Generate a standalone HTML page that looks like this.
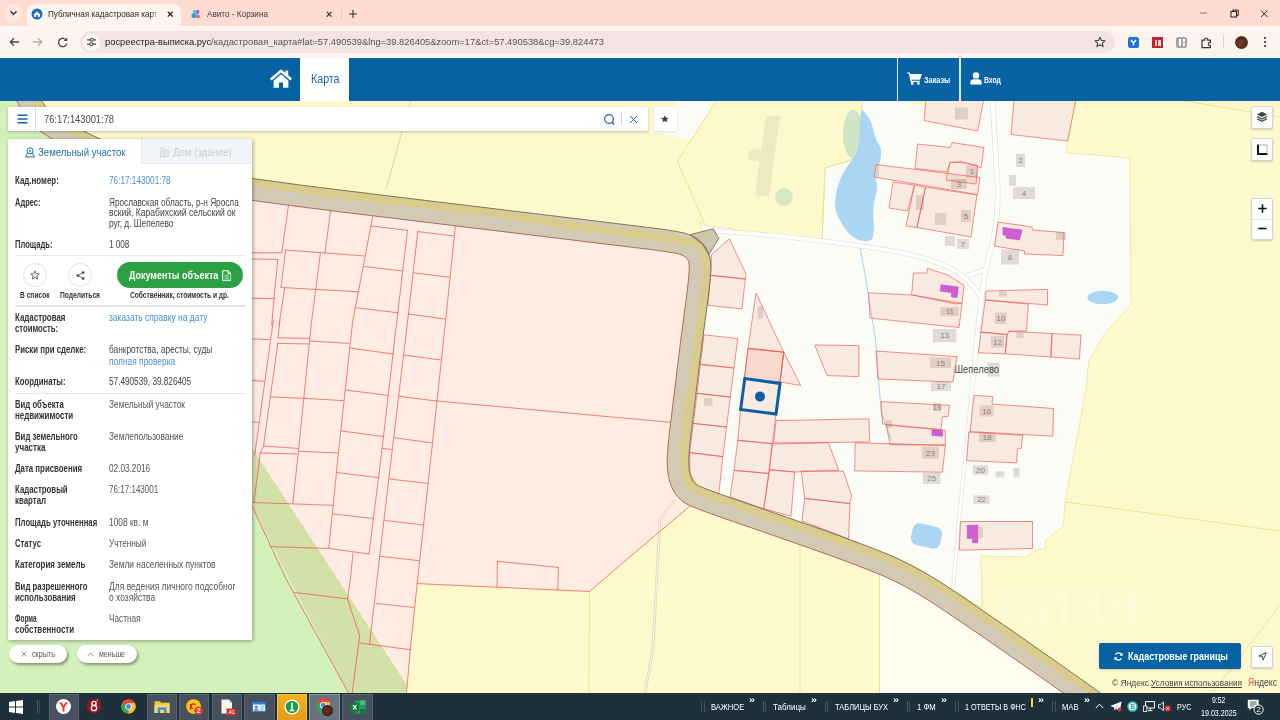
<!DOCTYPE html><html lang="ru"><head><meta charset="utf-8"><title>Публичная кадастровая карта</title><style>
html,body{margin:0;padding:0}
body{width:1280px;height:720px;overflow:hidden;position:relative;background:#fdf9cd;font-family:"Liberation Sans",sans-serif}
.tx{position:absolute;white-space:nowrap;transform-origin:0 50%;display:block}
.abs{position:absolute}
.mbtn{position:absolute;background:#fff;border:1px solid #d6d6d6;border-radius:2px;box-shadow:0 1px 2px rgba(0,0,0,.18);box-sizing:border-box}
</style></head><body>
<svg id="map" width="1280" height="720" viewBox="0 0 1280 720" style="position:absolute;left:0;top:0">
<rect width="1280" height="720" fill="#fdf9cd"/>
<polygon fill="#d3f1bb" points="0.0,95.0 25.0,95.0 30.5,104.0 42.0,120.0 65.0,134.0 110.0,156.0 180.0,177.0 252.0,190.0 252.0,448.0 407.0,692.0 407.0,700.0 0.0,700.0"/>
<polygon fill="#fcfcf6" stroke="#ece38e" stroke-width="0.8" points="700.0,222.0 705.0,225.0 822.0,242.5 825.0,168.0 851.0,160.0 860.0,154.0 862.0,99.0 1076.0,99.0 1066.0,152.5 1130.0,158.0 1131.0,305.0 1103.7,335.0 1088.7,361.0 1086.0,390.0 1065.0,502.0 1063.4,526.0 1045.6,540.0 1045.6,547.8 1034.0,550.6 1027.0,557.0 981.0,556.0 982.0,608.0 953.0,590.0 912.0,565.0 850.0,540.0 700.0,489.0 688.0,470.0 690.0,420.0 702.0,340.0 709.0,256.0"/>
<polygon fill="#fdf9cd" points="899.0,99.0 927.0,99.0 925.0,107.5"/>
<polygon fill="#fffdf0" points="879.5,560.0 879.5,700.0 1100.0,700.0 1000.0,640.0 900.0,570.0"/>
<polygon fill="#fcfcf6" points="676.0,99.0 718.0,99.0 691.0,140.0 650.0,131.5 676.0,120.0"/>
<polygon fill="#feece2" points="252.0,190.0 690.0,245.0 690.0,265.0 680.6,340.0 671.5,420.0 667.0,457.5 669.7,482.0 680.0,500.6 689.4,506.0 632.0,555.0 589.5,591.5 417.4,583.7 410.3,649.7 406.6,684.4 406.6,700.0 352.0,700.0 348.4,692.8 252.0,506.0"/>
<polygon fill="#d4e0aa" points="252.0,448.0 406.6,684.4 406.6,700.0 352.0,700.0 252.0,506.0"/>
<g fill="none" stroke="#ece38e" stroke-width="1">
<polyline points="717.0,100.0 677.5,161.0 705.0,225.0"/>
<polyline points="1180.0,100.0 1280.0,117.0"/>
<polyline points="800.0,544.0 800.0,693.0"/>
<polyline points="879.5,572.0 879.5,693.0"/>
<polyline points="589.5,591.5 589.0,693.0"/>
<polyline points="1066.0,502.0 1100.0,506.5 1280.0,531.0"/>
<polyline points="1280.0,605.0 1212.5,693.0"/>
<polyline points="822.0,242.5 825.0,168.0 851.0,160.0"/>
</g>
<polyline fill="none" stroke="#cfdab4" stroke-width="1" points="411.0,100.0 386.0,189.0"/>
<polygon fill="#efe9c3" points="766.0,116.0 780.0,116.0 769.0,197.0 755.0,195.0 759.5,161.0 748.0,160.0 749.0,149.0 761.0,150.0"/>
<circle cx="784" cy="197" r="9" fill="#d5e8c4"/>
<ellipse cx="853" cy="134" rx="10" ry="24" fill="#cfe6c6"/>
<polygon fill="#aad6f4" points="862.5,110.0 863.0,110.6 864.1,111.9 865.7,113.8 867.8,116.2 869.7,119.2 871.2,122.7 872.5,126.6 873.5,130.9 874.7,135.0 876.1,138.8 877.6,142.2 879.4,145.3 880.6,148.4 881.2,151.6 881.2,154.7 880.8,157.8 880.1,161.1 879.2,164.5 878.1,168.1 876.9,171.9 876.1,175.3 875.9,178.4 876.1,181.2 876.9,183.8 877.1,186.9 876.8,190.6 875.9,195.0 874.6,200.0 873.7,205.5 873.2,211.4 873.2,217.8 873.8,224.7 873.8,230.3 873.5,234.6 872.8,237.6 871.7,239.4 869.8,240.5 867.0,241.0 863.4,240.9 859.1,240.1 854.8,238.2 850.8,235.2 846.9,230.9 843.1,225.6 840.1,220.6 837.8,216.0 836.2,211.9 835.3,208.1 835.0,203.8 835.3,198.8 836.2,193.1 837.8,186.9 839.5,181.2 841.5,176.2 843.8,171.9 846.2,168.1 848.7,164.5 851.1,161.1 853.4,157.8 855.6,154.7 857.4,150.0 858.6,143.8 859.4,135.9 859.6,126.6 860.0,119.4 860.4,114.4 860.9,111.6 861.6,110.9 862.0,110.5 862.3,110.2 862.5,110.0"/>
<ellipse cx="1102.8" cy="297.5" rx="15.4" ry="6.8" fill="#aad6f4"/>
<rect x="911.5" y="525" width="30" height="22" rx="7" fill="#aad6f4" transform="rotate(13 926.5 536)"/>
<polyline fill="none" stroke="#a9d1ee" stroke-width="1" points="860.0,247.5 866.0,280.0 875.6,340.0 881.0,411.0 891.5,441.0"/>
<polyline fill="none" stroke="#e0e0e0" stroke-width="5.6" stroke-linejoin="round" points="992.5,99.0 992.7,102.8 993.2,110.4 993.8,121.9 994.7,137.1 995.5,151.1 996.2,163.7 996.9,175.0 997.6,185.0 997.8,195.0 997.5,205.0 996.8,215.0 995.7,225.0 994.4,233.9 993.0,241.6 991.4,248.2 989.6,253.8 988.0,259.6 986.5,265.9 985.1,272.5 983.9,279.5 982.4,290.4 980.6,305.1 978.6,323.8 976.4,346.2 974.7,363.1 973.6,374.4 973.0,380.0"/>
<polyline fill="none" stroke="#e0e0e0" stroke-width="4.0" stroke-linejoin="round" points="973.0,380.0 961.0,500.0 953.0,588.0"/>
<polyline fill="none" stroke="#e0e0e0" stroke-width="5.0" stroke-linejoin="round" points="716.0,231.0 720.0,231.3 728.0,231.9 740.0,232.9 756.0,234.1 770.7,235.4 784.1,236.6 796.1,237.9 806.9,239.1 817.4,240.4 827.6,241.6 837.6,242.9 847.4,244.1 857.1,245.4 866.7,246.8 876.2,248.2 885.8,249.8 894.8,251.4 903.4,253.1 911.6,255.0 919.4,257.0 926.7,259.1 933.6,261.4 940.0,263.8 946.0,266.2 951.4,268.9 956.3,271.6 960.6,274.5 964.4,277.5 967.9,280.7 971.1,284.1 974.1,287.6 976.9,291.4 978.9,294.2 980.3,296.1 981.0,297.0"/>
<polyline fill="none" stroke="#e0e0e0" stroke-width="5.0" stroke-linejoin="round" points="966.0,276.0 986.0,269.5"/>
<polyline fill="none" stroke="#ffffff" stroke-width="4.2" stroke-linejoin="round" points="992.5,99.0 992.7,102.8 993.2,110.4 993.8,121.9 994.7,137.1 995.5,151.1 996.2,163.7 996.9,175.0 997.6,185.0 997.8,195.0 997.5,205.0 996.8,215.0 995.7,225.0 994.4,233.9 993.0,241.6 991.4,248.2 989.6,253.8 988.0,259.6 986.5,265.9 985.1,272.5 983.9,279.5 982.4,290.4 980.6,305.1 978.6,323.8 976.4,346.2 974.7,363.1 973.6,374.4 973.0,380.0"/>
<polyline fill="none" stroke="#ffffff" stroke-width="2.6" stroke-linejoin="round" points="973.0,380.0 961.0,500.0 953.0,588.0"/>
<polyline fill="none" stroke="#ffffff" stroke-width="3.6" stroke-linejoin="round" points="716.0,231.0 720.0,231.3 728.0,231.9 740.0,232.9 756.0,234.1 770.7,235.4 784.1,236.6 796.1,237.9 806.9,239.1 817.4,240.4 827.6,241.6 837.6,242.9 847.4,244.1 857.1,245.4 866.7,246.8 876.2,248.2 885.8,249.8 894.8,251.4 903.4,253.1 911.6,255.0 919.4,257.0 926.7,259.1 933.6,261.4 940.0,263.8 946.0,266.2 951.4,268.9 956.3,271.6 960.6,274.5 964.4,277.5 967.9,280.7 971.1,284.1 974.1,287.6 976.9,291.4 978.9,294.2 980.3,296.1 981.0,297.0"/>
<polyline fill="none" stroke="#ffffff" stroke-width="3.6" stroke-linejoin="round" points="966.0,276.0 986.0,269.5"/>
<polyline fill="none" stroke="#e0cfc0" stroke-width="2.6" points="675.0,500.0 660.0,519.0 653.0,648.0 645.0,693.0"/>
<polyline fill="none" stroke="#fdf3e6" stroke-width="1.2" points="675.0,500.0 660.0,519.0 653.0,648.0 645.0,693.0"/>
<g fill="#e0dcd5">
<rect x="1016" y="154" width="9" height="13"/>
<rect x="1009" y="175" width="7" height="11"/>
<rect x="1013" y="187" width="22" height="12"/>
<rect x="1001" y="249.5" width="18" height="15"/>
<rect x="957" y="239" width="12" height="10"/>
<rect x="945" y="236" width="10" height="10"/>
<rect x="961" y="210" width="10" height="12"/>
<rect x="935" y="213" width="11" height="12"/>
<rect x="916" y="195" width="8" height="15"/>
<rect x="966" y="165.5" width="12" height="12"/>
<rect x="951" y="179" width="16" height="10"/>
<rect x="955" y="107.5" width="13" height="12"/>
<rect x="1056" y="232" width="10" height="8"/>
<rect x="940.6" y="307" width="18.4" height="9"/>
<rect x="932.75" y="329" width="23.75" height="13"/>
<rect x="930" y="357.5" width="21" height="10.5"/>
<rect x="931" y="381.5" width="20" height="9.5"/>
<rect x="995" y="312.5" width="11.6" height="11.5"/>
<rect x="991" y="336" width="13" height="11.75"/>
<rect x="1016.5" y="332" width="7.2" height="6"/>
<rect x="999" y="291" width="8" height="5.5"/>
<rect x="987.5" y="362.75" width="12.2" height="13.85"/>
<rect x="933" y="402.5" width="8" height="9"/>
<rect x="886" y="420" width="6" height="8"/>
<rect x="922" y="446.5" width="16.75" height="12.25"/>
<rect x="922.8" y="472.8" width="17.8" height="11.2"/>
<rect x="979.6" y="405.3" width="13.9" height="11.2"/>
<rect x="979" y="432.5" width="16.4" height="9.5"/>
<rect x="972.9" y="465.3" width="15" height="9.4"/>
<rect x="995.4" y="471.3" width="9" height="6.2"/>
<rect x="1013.4" y="467.75" width="6" height="9.75"/>
<rect x="973.4" y="495.3" width="16.35" height="8.45"/>
<rect x="978" y="527" width="4.8" height="11.4"/>
<rect x="757.5" y="306" width="5.5" height="12.4"/>
<rect x="704" y="398" width="8.5" height="7.6"/>
<rect x="874.5" y="165" width="4.5" height="12"/>
</g>
<g font-family="'Liberation Sans',sans-serif" font-size="8" fill="#858585" text-anchor="middle">
<text x="1020.5" y="163.4">2</text>
<text x="1024.0" y="195.9">4</text>
<text x="1010.0" y="259.9">8</text>
<text x="963.0" y="246.9">7</text>
<text x="966.0" y="218.9">5</text>
<text x="972.0" y="174.4">1</text>
<text x="959.0" y="186.9">3</text>
<text x="949.8" y="314.4">11</text>
<text x="944.6" y="338.4">13</text>
<text x="940.5" y="365.6">15</text>
<text x="941.0" y="389.1">17</text>
<text x="1000.8" y="321.1">10</text>
<text x="997.5" y="344.8">12</text>
<text x="937.0" y="409.9">19</text>
<text x="930.4" y="455.5">23</text>
<text x="931.7" y="481.3">25</text>
<text x="986.6" y="413.8">16</text>
<text x="987.2" y="440.1">18</text>
<text x="980.4" y="472.9">20</text>
<text x="981.6" y="502.4">22</text>
</g>
<text x="954.5" y="373" font-family="'Liberation Sans',sans-serif" font-size="10" fill="#4a4a4a" textLength="44.5" lengthAdjust="spacingAndGlyphs">Шепелево</text>
<g fill="rgba(225,85,50,0.105)" stroke="#ea5a4e" stroke-opacity="0.85" stroke-width="0.8" stroke-linejoin="round">
<polygon points="711.5,254.7 729.4,238.8 746.2,274.4 745.3,279.0 710.6,275.3"/>
<polygon points="710.6,275.3 745.3,279.0 742.0,309.0 707.8,305.3"/>
<polygon points="704.0,334.8 737.8,338.5 734.0,368.0 700.3,364.4"/>
<polygon points="700.3,364.4 734.0,368.0 730.3,397.0 697.0,393.4"/>
<polygon points="697.0,393.4 730.3,397.0 726.6,427.0 693.4,423.4"/>
<polygon points="693.4,423.4 726.6,427.0 722.8,456.6 689.6,452.5"/>
<polygon points="689.6,452.5 722.8,456.6 718.8,493.8 697.0,486.5 690.0,474.0"/>
<polygon points="756.0,293.0 783.8,352.2 748.0,348.4"/>
<polygon points="748.0,348.4 783.8,352.2 780.0,382.0 744.4,378.4"/>
<polygon points="748.0,348.4 783.8,352.2 780.0,382.0 744.4,378.4"/>
<polygon points="783.8,352.2 800.6,385.4 780.0,382.0"/>
<polygon points="744.8,378.4 780.0,383.5 776.0,414.0 740.6,409.4"/>
<polygon points="740.6,409.4 776.0,414.0 772.5,443.7 737.8,440.3"/>
<polygon points="737.8,440.3 772.5,443.7 768.8,473.5 734.0,470.3"/>
<polygon points="734.0,470.3 768.8,473.5 763.8,508.8 730.0,497.0"/>
<polygon points="814.7,345.0 858.8,345.6 858.8,376.6 827.0,375.6"/>
<polygon points="776.2,420.6 869.0,418.8 869.6,442.0 773.4,443.0"/>
<polygon points="772.0,444.0 828.4,442.8 838.8,470.3 794.7,472.0 769.4,469.8"/>
<polygon points="769.4,469.8 794.7,472.0 791.0,516.2 763.8,508.8"/>
<polygon points="801.2,470.9 843.4,471.2 851.5,495.6 850.0,503.5 804.6,498.4"/>
<polygon points="804.6,498.4 850.0,503.5 848.5,538.8 802.0,521.0"/>
<polygon points="855.2,442.8 945.3,445.2 942.5,472.2 854.7,470.9"/>
<polygon points="886.2,425.0 945.3,430.2 945.3,445.2 890.0,444.7"/>
<polygon points="881.0,401.6 949.6,405.3 948.0,416.6 942.5,416.6 941.0,429.7 882.5,424.0"/>
<polygon points="876.0,351.0 957.0,356.6 952.8,382.0 877.8,379.0"/>
<polygon points="868.4,292.8 911.6,295.0 962.0,303.5 959.0,327.5 870.0,318.0"/>
<polygon points="913.4,273.0 926.6,273.0 927.5,268.4 948.0,275.0 964.0,285.3 962.0,303.0 955.6,304.0 911.6,294.7"/>
<polygon points="986.0,291.0 1047.5,289.4 1047.5,305.0 985.0,300.0"/>
<polygon points="985.2,300.0 1028.4,304.0 1026.5,331.0 1009.0,331.2 1007.0,334.6 981.0,332.0"/>
<polygon points="981.0,332.2 1007.0,334.6 1005.3,353.8 978.5,352.8"/>
<polygon points="1009.0,331.2 1052.0,333.5 1051.0,357.0 1005.3,353.8 1007.0,334.6"/>
<polygon points="1052.0,333.5 1081.0,335.0 1079.4,359.0 1051.0,357.0"/>
<polygon points="974.0,395.4 992.8,396.5 992.0,404.0 1053.5,408.5 1052.8,436.2 970.2,431.6"/>
<polygon points="968.8,432.0 1022.8,435.3 1021.2,448.4 1017.5,448.4 1016.6,462.9 966.5,460.6"/>
<polygon points="960.3,521.5 1032.5,521.5 1032.5,548.4 959.4,550.2"/>
<polygon points="926.0,99.0 984.0,99.0 977.5,131.0 924.0,120.5"/>
<polygon points="1014.0,99.0 1076.0,99.0 1067.5,141.0 1011.0,134.5"/>
<polygon points="917.5,144.0 950.0,147.5 952.0,142.5 984.0,147.5 981.0,168.0 977.0,166.0 961.0,162.0 950.0,162.5 947.0,172.0 915.0,168.5"/>
<polygon points="876.0,164.5 980.0,177.5 977.5,194.5 874.0,177.0"/>
<polygon points="950.0,162.5 961.0,162.0 977.5,165.5 976.0,184.0 946.0,180.0"/>
<polygon points="893.0,182.0 914.5,185.0 907.5,211.0 889.0,208.0"/>
<polygon points="914.5,185.0 925.5,187.0 917.0,227.5 906.0,226.0"/>
<polygon points="925.5,187.0 977.0,195.0 971.0,237.0 917.0,227.5"/>
<polygon points="998.0,222.0 1032.0,227.0 1032.5,230.0 1064.0,232.5 1063.0,255.5 1024.5,254.0 1024.5,251.0 994.5,246.0"/>
</g>
<g fill="#cf5fd0" stroke="#b84fc0" stroke-width="0.6">
<polygon points="1003.0,227.5 1022.0,230.0 1019.5,240.0 1006.0,238.0 1006.0,235.0 1003.0,235.0"/>
<polygon points="941.0,284.8 958.4,287.0 957.0,297.5 951.5,297.0 951.5,292.8 940.2,291.0"/>
<polygon points="932.0,429.7 942.5,430.5 942.5,436.2 932.0,435.5"/>
<polygon points="967.2,525.3 977.8,525.3 977.8,542.8 972.5,542.8 972.5,538.4 967.2,538.4"/>
</g>
<g stroke="#ea5a4e" stroke-width="0.9" stroke-linecap="round" opacity="0.85">
<line x1="288.4" y1="206" x2="281.9" y2="251.9"/>
<line x1="330.6" y1="210.6" x2="325" y2="252.8"/>
<line x1="285.6" y1="250" x2="280.9" y2="287.5"/>
<line x1="284.7" y1="288.4" x2="279" y2="325"/>
<line x1="277.75" y1="259.4" x2="271.6" y2="325"/>
<line x1="252" y1="252.8" x2="281.9" y2="252.8"/>
<line x1="252" y1="259" x2="277.75" y2="259.4"/>
<line x1="285.6" y1="250" x2="364.4" y2="256"/>
<line x1="281.9" y1="287.5" x2="358.75" y2="291.8"/>
<line x1="252" y1="298.2" x2="275.3" y2="298.75"/>
<line x1="371" y1="226" x2="407.5" y2="230.3"/>
<line x1="364.4" y1="266.5" x2="402.8" y2="271"/>
<line x1="356.5" y1="307.75" x2="398" y2="312.8"/>
<line x1="417.8" y1="231.6" x2="454" y2="236"/>
<line x1="413.5" y1="272.9" x2="449" y2="277.2"/>
<line x1="408.4" y1="314" x2="445" y2="319"/>
<line x1="273.4" y1="320" x2="254.7" y2="455"/>
<line x1="280" y1="320" x2="278.1" y2="337.8"/>
<line x1="252" y1="338.75" x2="269.7" y2="339.7"/>
<line x1="278" y1="337.8" x2="310" y2="338.4"/>
<line x1="277.75" y1="343.4" x2="309.6" y2="344"/>
<line x1="310" y1="341" x2="349" y2="343.4"/>
<line x1="252" y1="380.4" x2="264" y2="381.3"/>
<line x1="271" y1="396.9" x2="304.4" y2="398.4"/>
<line x1="304.4" y1="398.4" x2="343.4" y2="400.6"/>
<line x1="252" y1="421.6" x2="258.4" y2="422.6"/>
<line x1="263.5" y1="446" x2="298.4" y2="448.4"/>
<line x1="260.3" y1="453" x2="297" y2="454"/>
<line x1="298.75" y1="451.25" x2="338" y2="453"/>
<line x1="349.4" y1="348" x2="393.4" y2="354"/>
<line x1="345.6" y1="390" x2="387.8" y2="395.4"/>
<line x1="341.5" y1="431" x2="383.5" y2="436.6"/>
<line x1="403.75" y1="355" x2="440.9" y2="360"/>
<line x1="399" y1="396.3" x2="436.6" y2="401"/>
<line x1="436.6" y1="401" x2="670.5" y2="422.3"/>
<line x1="394.4" y1="437.75" x2="431.5" y2="442.8"/>
<line x1="382" y1="448.4" x2="391.6" y2="449.4"/>
<line x1="252.8" y1="502.5" x2="333.4" y2="505.3"/>
<line x1="269.7" y1="546.6" x2="328.75" y2="548.4"/>
<line x1="328.75" y1="548.4" x2="369" y2="554"/>
<line x1="336.6" y1="472.5" x2="378.4" y2="477.6"/>
<line x1="332.9" y1="514" x2="372.8" y2="518.4"/>
<line x1="389.7" y1="479" x2="427.75" y2="483.4"/>
<line x1="384.6" y1="520.3" x2="422.9" y2="525"/>
<line x1="379.75" y1="556.3" x2="418.4" y2="560.6"/>
<line x1="295" y1="592.5" x2="347.5" y2="599"/>
<line x1="347.5" y1="599" x2="359.7" y2="635.6"/>
<line x1="359.7" y1="635.6" x2="352.2" y2="692.8"/>
<line x1="359.7" y1="643" x2="410.3" y2="649.7"/>
<line x1="410.3" y1="649.7" x2="406.6" y2="692"/>
<line x1="376" y1="603.4" x2="414" y2="607.5"/>
<line x1="417.4" y1="583.6" x2="589.5" y2="591.5"/>
<line x1="589.5" y1="591.5" x2="632" y2="555"/>
<line x1="632" y1="555" x2="689.4" y2="506.6"/>
<line x1="497.4" y1="561.3" x2="558.5" y2="567.4"/>
<line x1="558.5" y1="567.4" x2="557.7" y2="590"/>
<line x1="497.4" y1="561.3" x2="497" y2="587.3"/>
<polyline fill="none" points="320.3,253.8 311.5,322.0 298.4,451.5 292.8,503.4"/>
<polyline fill="none" points="372.8,216.2 352.6,322.0 338.5,452.0 328.8,548.4"/>
<polyline fill="none" points="407.5,230.3 396.7,322.0 381.7,452.0 369.0,554.0"/>
<polyline fill="none" points="417.8,231.6 407.5,322.0 392.0,452.0 377.5,575.0 369.6,644.0"/>
<polyline fill="none" points="455.3,226.6 445.5,322.0 431.5,452.0 417.2,583.5 410.3,649.7"/>
<polyline fill="none" points="277.8,343.4 263.5,446.0 260.3,452.8 253.8,502.5"/>
<polyline fill="none" points="353.0,553.0 350.5,578.0 347.5,599.0"/>
<polyline fill="none" points="252.0,506.0 285.0,577.0 348.4,692.8"/>
</g>
<polygon fill="#d2cab4" points="21.7,63.2 21.8,63.5 22.1,64.1 22.6,65.0 23.2,66.3 24.0,67.9 24.9,69.7 26.0,71.9 27.3,74.4 28.5,76.8 29.7,79.2 30.8,81.5 32.0,83.7 33.1,85.8 34.2,87.9 35.3,90.0 36.3,91.8 37.3,93.7 38.3,95.5 39.5,97.4 40.6,99.2 41.8,101.0 43.1,102.9 44.3,104.8 45.5,106.4 46.7,107.9 48.1,109.3 49.6,110.8 51.4,112.4 53.4,113.9 55.5,115.5 57.8,117.0 60.5,118.6 63.5,120.4 66.9,122.3 70.7,124.4 74.9,126.6 79.4,128.9 84.2,131.3 89.5,133.9 94.9,136.6 100.7,139.2 106.8,141.8 113.4,144.5 120.4,147.1 127.8,149.7 135.6,152.3 143.8,154.9 152.4,157.4 161.0,159.9 169.7,162.3 178.4,164.5 187.1,166.6 195.9,168.6 204.7,170.4 213.5,172.2 222.3,173.8 233.3,175.6 246.3,177.6 261.4,179.8 278.6,182.1 297.8,184.7 319.2,187.4 342.6,190.3 368.1,193.4 393.2,196.5 418.1,199.5 442.7,202.5 466.9,205.4 490.9,208.3 514.5,211.2 537.8,214.0 560.8,216.8 581.4,219.3 599.5,221.5 615.2,223.4 628.4,225.0 639.2,226.4 647.6,227.4 653.6,228.1 657.1,228.6 660.6,229.0 664.0,229.5 667.2,230.0 670.4,230.5 673.4,231.0 676.4,231.5 679.2,232.0 682.2,232.6 685.3,233.4 688.2,234.4 691.0,235.5 693.7,236.8 696.3,238.3 698.8,240.0 701.0,242.0 703.1,244.1 704.9,246.4 706.5,248.9 707.8,251.5 708.9,254.3 709.7,257.1 710.3,260.0 710.7,262.9 710.9,265.9 710.8,269.5 710.6,273.6 710.3,278.3 709.7,283.7 709.1,289.9 708.2,296.7 707.3,304.3 706.1,312.6 705.0,321.0 703.9,329.7 702.7,338.6 701.6,347.7 700.4,357.0 699.2,366.5 698.0,376.3 696.8,386.3 695.7,395.6 694.7,404.2 693.7,412.1 692.9,419.3 692.1,425.7 691.4,431.5 690.8,436.6 690.3,440.9 689.8,444.9 689.5,448.7 689.2,452.3 689.0,455.6 688.9,458.6 688.8,461.4 688.8,463.9 688.9,466.2 689.1,468.3 689.3,470.2 689.7,472.1 690.1,473.9 690.5,475.6 691.1,477.2 691.7,478.7 692.3,480.0 692.9,481.0 693.6,482.0 694.3,482.8 695.1,483.6 696.0,484.3 697.1,485.0 698.3,485.7 699.8,486.4 702.6,487.5 706.4,489.0 711.1,490.8 716.8,492.9 723.4,495.2 730.9,497.9 739.4,500.8 748.7,504.1 758.1,507.3 767.6,510.6 777.0,513.9 786.6,517.2 796.1,520.5 805.7,523.9 815.3,527.2 824.9,530.6 834.3,533.9 843.3,537.2 852.1,540.5 860.5,543.6 868.7,546.7 876.5,549.8 884.0,552.8 891.3,555.8 898.9,559.2 906.7,563.0 914.6,567.1 922.6,571.5 930.8,576.3 939.2,581.4 947.7,586.9 956.3,592.6 965.0,598.5 974.1,604.6 983.3,611.0 992.8,617.5 1002.6,624.2 1012.6,631.1 1022.8,638.2 1033.3,645.6 1043.0,652.4 1052.0,658.7 1060.2,664.5 1067.7,669.8 1074.5,674.5 1080.6,678.8 1085.9,682.6 1090.4,685.8 1094.4,688.7 1097.8,691.1 1100.6,693.2 1102.9,694.8 1104.6,696.0 1105.7,696.8 1106.3,697.2 1093.7,714.8 1093.1,714.4 1092.0,713.6 1090.3,712.3 1088.0,710.7 1085.2,708.7 1081.8,706.2 1077.8,703.4 1073.3,700.2 1068.0,696.4 1062.0,692.2 1055.3,687.4 1047.8,682.1 1039.6,676.3 1030.6,670.1 1020.9,663.3 1010.4,656.0 1000.2,648.9 990.3,642.0 980.6,635.3 971.1,628.8 961.9,622.5 952.9,616.4 944.2,610.6 935.8,604.9 927.7,599.7 919.7,594.8 912.0,590.3 904.4,586.1 897.0,582.3 889.8,578.8 882.8,575.7 875.9,572.8 868.5,569.9 860.8,566.9 852.9,563.8 844.5,560.7 835.9,557.5 827.0,554.3 817.7,551.0 808.1,547.6 798.5,544.2 789.0,540.9 779.4,537.6 770.0,534.3 760.5,531.0 751.1,527.7 741.7,524.5 732.3,521.2 723.8,518.3 716.2,515.6 709.5,513.2 703.6,511.1 698.7,509.2 694.6,507.6 691.3,506.3 688.6,505.0 685.8,503.5 683.2,501.8 680.8,499.8 678.6,497.6 676.5,495.3 674.7,492.7 673.1,490.0 671.9,487.3 670.8,484.7 669.9,481.9 669.1,479.2 668.5,476.3 668.0,473.4 667.6,470.5 667.4,467.4 667.3,464.4 667.2,461.3 667.3,458.0 667.4,454.4 667.7,450.7 668.0,446.9 668.3,442.8 668.8,438.5 669.3,434.0 669.9,428.9 670.6,423.2 671.4,416.7 672.3,409.5 673.2,401.6 674.3,393.0 675.4,383.7 676.6,373.7 677.8,363.9 679.0,354.3 680.1,345.0 681.3,335.8 682.5,326.9 683.6,318.2 684.7,309.7 685.9,301.5 686.8,294.0 687.6,287.4 688.3,281.5 688.7,276.4 689.1,272.2 689.2,268.8 689.3,266.3 689.2,264.9 689.0,263.5 688.8,262.3 688.5,261.3 688.1,260.4 687.7,259.6 687.3,258.9 686.7,258.3 686.2,257.7 685.5,257.1 684.6,256.5 683.6,255.9 682.4,255.3 680.9,254.7 679.3,254.2 677.4,253.7 675.1,253.2 672.5,252.7 669.8,252.3 666.9,251.8 664.0,251.3 660.9,250.9 657.7,250.4 654.4,250.0 650.9,249.5 645.0,248.8 636.6,247.8 625.8,246.5 612.6,244.9 596.9,243.0 578.8,240.8 558.2,238.3 535.2,235.5 511.9,232.7 488.3,229.8 464.3,226.9 440.1,223.9 415.5,221.0 390.6,217.9 365.4,214.9 339.9,211.8 316.5,208.8 295.0,206.1 275.7,203.5 258.4,201.2 243.1,199.0 229.9,196.9 218.7,195.1 209.5,193.4 200.4,191.6 191.3,189.7 182.2,187.6 173.2,185.4 164.2,183.1 155.3,180.7 146.3,178.2 137.4,175.5 128.9,172.8 120.8,170.1 113.0,167.4 105.6,164.6 98.6,161.8 92.0,159.0 85.7,156.1 79.9,153.3 74.6,150.7 69.6,148.1 64.9,145.7 60.5,143.4 56.5,141.2 52.8,139.1 49.4,137.2 46.3,135.2 43.2,133.2 40.4,131.2 37.6,129.0 35.1,126.8 32.7,124.5 30.5,122.1 28.4,119.6 26.7,117.2 25.2,115.1 23.8,113.0 22.4,110.8 21.0,108.6 19.7,106.5 18.5,104.3 17.3,102.2 16.2,100.0 15.1,98.0 13.9,95.8 12.8,93.6 11.6,91.3 10.4,89.0 9.2,86.6 8.0,84.1 6.7,81.6 5.6,79.4 4.7,77.5 3.9,76.0 3.3,74.7 2.8,73.8 2.5,73.1 2.3,72.8"/>
<polyline fill="none" stroke="#d9cb8c" stroke-width="8" stroke-linejoin="round" points="17.8,65.1 18.0,65.4 18.3,66.0 18.8,67.0 19.4,68.2 20.2,69.8 21.1,71.7 22.2,73.8 23.4,76.3 24.7,78.8 25.8,81.1 27.0,83.4 28.2,85.6 29.3,87.8 30.4,89.9 31.5,92.0 32.5,93.9 33.5,95.8 34.6,97.7 35.8,99.6 37.0,101.5 38.2,103.4 39.5,105.3 40.8,107.2 42.1,109.0 43.5,110.7 45.0,112.4 46.7,114.0 48.7,115.7 50.8,117.3 53.1,119.0 55.5,120.6 58.3,122.3 61.4,124.1 64.9,126.1 68.7,128.1 72.9,130.4 77.4,132.7 82.3,135.2 87.6,137.8 93.1,140.5 98.9,143.2 105.2,145.8 111.9,148.5 118.9,151.1 126.4,153.7 134.3,156.4 142.5,159.0 151.2,161.6 159.9,164.1 168.6,166.4 177.4,168.6 186.2,170.8 195.0,172.8 203.8,174.6 212.7,176.4 221.6,178.0 232.6,179.8 245.6,181.8 260.8,184.0 278.0,186.4 297.3,188.9 318.6,191.7 342.0,194.6 367.5,197.7 392.7,200.8 417.6,203.8 442.2,206.8 466.4,209.7 490.3,212.6 490.3,212.6 490.3,212.5 490.2,212.5 490.1,212.4 494.4,213.0 503.1,214.4 516.2,216.6 533.8,219.6 551.9,222.5 570.6,225.3 590.0,228.1 610.0,230.8 627.8,233.2 643.2,235.3 656.5,237.0 667.5,238.5 676.8,239.8 684.4,241.2 690.4,242.4 694.6,243.7 698.1,245.3 700.9,247.3 702.9,249.8 704.1,252.7 705.0,256.9 705.6,262.5 705.7,269.4 705.6,277.6 705.0,286.9 704.0,297.3 702.6,308.8 700.7,321.2 698.7,335.6 696.4,351.9 693.9,370.0 691.1,390.0 688.8,407.3 686.9,421.9 685.4,433.9 684.3,443.1 683.6,450.5 683.3,456.0 683.4,459.6 683.9,461.4 684.2,462.7 684.4,463.6 684.5,464.0 684.6,466.4 684.8,468.7 685.1,470.9 685.5,473.0 685.9,474.9 686.4,476.9 687.0,478.7 687.7,480.4 688.5,482.0 689.3,483.4 690.2,484.6 691.2,485.8 692.3,486.8 693.5,487.8 694.8,488.7 696.3,489.6 698.1,490.4 701.0,491.5 704.8,493.0 709.6,494.8 715.3,496.9 722.0,499.3 729.5,501.9 737.9,504.9 747.3,508.1 756.7,511.4 766.2,514.7 775.6,517.9 785.1,521.3 794.7,524.6 804.2,527.9 813.8,531.3 823.5,534.7 832.8,538.0 841.9,541.3 850.6,544.5 859.0,547.6 867.1,550.8 874.9,553.8 882.4,556.8 889.6,559.8 897.1,563.1 904.7,566.8 912.5,570.9 920.5,575.3 928.6,580.0 936.9,585.1 945.3,590.5 953.9,596.2 962.6,602.1 971.6,608.2 980.9,614.5 990.4,621.0 1000.1,627.7 1010.1,634.6 1020.3,641.8 1030.8,649.1 1040.5,655.9 1049.5,662.2 1057.8,668.0 1065.3,673.3 1072.0,678.0 1078.1,682.3 1083.4,686.1 1087.9,689.3 1091.9,692.2 1095.3,694.6 1098.1,696.7 1100.4,698.3 1102.1,699.5 1103.2,700.3 1103.8,700.7"/>
<polygon fill="#cdc5ac" stroke="#75664c" stroke-width="0.8" points="690.4,234.6 713.3,228.7 718.9,238.4 708.8,254.7 703.0,245.0"/>
<polyline fill="none" stroke="#75664c" stroke-width="0.9" points="21.7,63.2 21.8,63.5 22.1,64.1 22.6,65.0 23.2,66.3 24.0,67.9 24.9,69.7 26.0,71.9 27.3,74.4 28.5,76.8 29.7,79.2 30.8,81.5 32.0,83.7 33.1,85.8 34.2,87.9 35.3,90.0 36.3,91.8 37.3,93.7 38.3,95.5 39.5,97.4 40.6,99.2 41.8,101.0 43.1,102.9 44.3,104.8 45.5,106.4 46.7,107.9 48.1,109.3 49.6,110.8 51.4,112.4 53.4,113.9 55.5,115.5 57.8,117.0 60.5,118.6 63.5,120.4 66.9,122.3 70.7,124.4 74.9,126.6 79.4,128.9 84.2,131.3 89.5,133.9 94.9,136.6 100.7,139.2 106.8,141.8 113.4,144.5 120.4,147.1 127.8,149.7 135.6,152.3 143.8,154.9 152.4,157.4 161.0,159.9 169.7,162.3 178.4,164.5 187.1,166.6 195.9,168.6 204.7,170.4 213.5,172.2 222.3,173.8 233.3,175.6 246.3,177.6 261.4,179.8 278.6,182.1 297.8,184.7 319.2,187.4 342.6,190.3 368.1,193.4 393.2,196.5 418.1,199.5 442.7,202.5 466.9,205.4 490.9,208.3 514.5,211.2 537.8,214.0 560.8,216.8 581.4,219.3 599.5,221.5 615.2,223.4 628.4,225.0 639.2,226.4 647.6,227.4 653.6,228.1 657.1,228.6 660.6,229.0 664.0,229.5 667.2,230.0 670.4,230.5 673.4,231.0 676.4,231.5 679.2,232.0 682.2,232.6 685.3,233.4 688.2,234.4 691.0,235.5 693.7,236.8 696.3,238.3 698.8,240.0 701.0,242.0 703.1,244.1 704.9,246.4 706.5,248.9 707.8,251.5 708.9,254.3 709.7,257.1 710.3,260.0 710.7,262.9 710.9,265.9 710.8,269.5 710.6,273.6 710.3,278.3 709.7,283.7 709.1,289.9 708.2,296.7 707.3,304.3 706.1,312.6 705.0,321.0 703.9,329.7 702.7,338.6 701.6,347.7 700.4,357.0 699.2,366.5 698.0,376.3 696.8,386.3 695.7,395.6 694.7,404.2 693.7,412.1 692.9,419.3 692.1,425.7 691.4,431.5 690.8,436.6 690.3,440.9 689.8,444.9 689.5,448.7 689.2,452.3 689.0,455.6 688.9,458.6 688.8,461.4 688.8,463.9 688.9,466.2 689.1,468.3 689.3,470.2 689.7,472.1 690.1,473.9 690.5,475.6 691.1,477.2 691.7,478.7 692.3,480.0 692.9,481.0 693.6,482.0 694.3,482.8 695.1,483.6 696.0,484.3 697.1,485.0 698.3,485.7 699.8,486.4 702.6,487.5 706.4,489.0 711.1,490.8 716.8,492.9 723.4,495.2 730.9,497.9 739.4,500.8 748.7,504.1 758.1,507.3 767.6,510.6 777.0,513.9 786.6,517.2 796.1,520.5 805.7,523.9 815.3,527.2 824.9,530.6 834.3,533.9 843.3,537.2 852.1,540.5 860.5,543.6 868.7,546.7 876.5,549.8 884.0,552.8 891.3,555.8 898.9,559.2 906.7,563.0 914.6,567.1 922.6,571.5 930.8,576.3 939.2,581.4 947.7,586.9 956.3,592.6 965.0,598.5 974.1,604.6 983.3,611.0 992.8,617.5 1002.6,624.2 1012.6,631.1 1022.8,638.2 1033.3,645.6 1043.0,652.4 1052.0,658.7 1060.2,664.5 1067.7,669.8 1074.5,674.5 1080.6,678.8 1085.9,682.6 1090.4,685.8 1094.4,688.7 1097.8,691.1 1100.6,693.2 1102.9,694.8 1104.6,696.0 1105.7,696.8 1106.3,697.2"/>
<polyline fill="none" stroke="#a5604a" stroke-width="0.9" points="2.3,72.8 2.5,73.1 2.8,73.8 3.3,74.7 3.9,76.0 4.7,77.5 5.6,79.4 6.7,81.6 8.0,84.1 9.2,86.6 10.4,89.0 11.6,91.3 12.8,93.6 13.9,95.8 15.1,98.0 16.2,100.0 17.3,102.2 18.5,104.3 19.7,106.5 21.0,108.6 22.4,110.8 23.8,113.0 25.2,115.1 26.7,117.2 28.4,119.6 30.5,122.1 32.7,124.5 35.1,126.8 37.6,129.0 40.4,131.2 43.2,133.2 46.3,135.2 49.4,137.2 52.8,139.1 56.5,141.2 60.5,143.4 64.9,145.7 69.6,148.1 74.6,150.7 79.9,153.3 85.7,156.1 92.0,159.0 98.6,161.8 105.6,164.6 113.0,167.4 120.8,170.1 128.9,172.8 137.4,175.5 146.3,178.2 155.3,180.7 164.2,183.1 173.2,185.4 182.2,187.6 191.3,189.7 200.4,191.6 209.5,193.4 218.7,195.1 229.9,196.9 243.1,199.0 258.4,201.2 275.7,203.5 295.0,206.1 316.5,208.8 339.9,211.8 365.4,214.9 390.6,217.9 415.5,221.0 440.1,223.9 464.3,226.9 488.3,229.8 511.9,232.7 535.2,235.5 558.2,238.3 578.8,240.8 596.9,243.0 612.6,244.9 625.8,246.5 636.6,247.8 645.0,248.8 650.9,249.5 654.4,250.0 657.7,250.4 660.9,250.9 664.0,251.3 666.9,251.8 669.8,252.3 672.5,252.7 675.1,253.2 677.4,253.7 679.3,254.2 680.9,254.7 682.4,255.3 683.6,255.9 684.6,256.5 685.5,257.1 686.2,257.7 686.7,258.3 687.3,258.9 687.7,259.6 688.1,260.4 688.5,261.3 688.8,262.3 689.0,263.5 689.2,264.9 689.3,266.3 689.2,268.8 689.1,272.2 688.7,276.4 688.3,281.5 687.6,287.4 686.8,294.0 685.9,301.5 684.7,309.7 683.6,318.2 682.5,326.9 681.3,335.8 680.1,345.0 679.0,354.3 677.8,363.9 676.6,373.7 675.4,383.7 674.3,393.0 673.2,401.6 672.3,409.5 671.4,416.7 670.6,423.2 669.9,428.9 669.3,434.0 668.8,438.5 668.3,442.8 668.0,446.9 667.7,450.7 667.4,454.4 667.3,458.0 667.2,461.3 667.3,464.4 667.4,467.4 667.6,470.5 668.0,473.4 668.5,476.3 669.1,479.2 669.9,481.9 670.8,484.7 671.9,487.3 673.1,490.0 674.7,492.7 676.5,495.3 678.6,497.6 680.8,499.8 683.2,501.8 685.8,503.5 688.6,505.0 691.3,506.3 694.6,507.6 698.7,509.2 703.6,511.1 709.5,513.2 716.2,515.6 723.8,518.3 732.3,521.2 741.7,524.5 751.1,527.7 760.5,531.0 770.0,534.3 779.4,537.6 789.0,540.9 798.5,544.2 808.1,547.6 817.7,551.0 827.0,554.3 835.9,557.5 844.5,560.7 852.9,563.8 860.8,566.9 868.5,569.9 875.9,572.8 882.8,575.7 889.8,578.8 897.0,582.3 904.4,586.1 912.0,590.3 919.7,594.8 927.7,599.7 935.8,604.9 944.2,610.6 952.9,616.4 961.9,622.5 971.1,628.8 980.6,635.3 990.3,642.0 1000.2,648.9 1010.4,656.0 1020.9,663.3 1030.6,670.1 1039.6,676.3 1047.8,682.1 1055.3,687.4 1062.0,692.2 1068.0,696.4 1073.3,700.2 1077.8,703.4 1081.8,706.2 1085.2,708.7 1088.0,710.7 1090.3,712.3 1092.0,713.6 1093.1,714.4 1093.7,714.8"/>
<polygon fill="none" stroke="#0b5fa5" stroke-width="3" stroke-linejoin="miter" points="744.8,378.4 780.0,383.5 776.0,414.0 740.6,409.4"/>
<circle cx="760" cy="396.6" r="5" fill="#0b5fa5"/>
<text x="998" y="625" font-family="'Liberation Sans',sans-serif" font-weight="bold" font-size="72" fill="#ffffff" fill-opacity="0.18" textLength="143" lengthAdjust="spacingAndGlyphs">циан</text>
</svg>
<div id="pageheader"><div class="abs" style="left:0;top:57.7px;width:1280px;height:43px;background:#0662a3"></div>
<div class="abs" style="left:300px;top:57.7px;width:48.5px;height:43px;background:#fff"></div>
<svg class="abs" style="left:269px;top:68px" width="24" height="21" viewBox="0 0 24 21"><path d="M12 1.2 L1 10.6 L2.6 12.4 L12 4.4 L21.4 12.4 L23 10.6 L19.2 7.3 V2.6 H16.4 V4.9Z" fill="#fff"/><path d="M12 6.2 L4.6 12.5 V19.8 H10 V14.6 H14 V19.8 H19.4 V12.5Z" fill="#fff"/></svg>
<span id="t1" class="tx" style="left:311px;top:71.8px;font-size:12px;line-height:14.4px;color:#1a65a8;transform:scaleX(0.8876);">Карта</span>
<div class="abs" style="left:896.6px;top:57.7px;width:1.6px;height:43px;background:#d5eafb"></div>
<div class="abs" style="left:959.3px;top:57.7px;width:1.6px;height:43px;background:#d5eafb"></div>
<svg class="abs" style="left:907px;top:72px" width="15" height="13" viewBox="0 0 15 13"><path d="M0 0.4 H2.7 L3.1 1.9 H14.7 L13 7.4 H4.5 L4.8 8.7 H12.8 V10 H3.7 L1.8 1.6 H0Z" fill="#fff" fill-rule="nonzero"/><path d="M3.1 1.9 H14.7 L13 7.4 H4.5Z" fill="#fff"/><circle cx="5.3" cy="11.4" r="1.4" fill="#fff"/><circle cx="11.4" cy="11.4" r="1.4" fill="#fff"/></svg>
<span id="t2" class="tx" style="left:923.8px;top:74.6px;font-size:9px;line-height:10.8px;color:#fff;font-weight:bold;transform:scaleX(0.8108);">Заказы</span>
<svg class="abs" style="left:969.5px;top:72px" width="12" height="13" viewBox="0 0 12 13"><circle cx="6" cy="3.4" r="3.2" fill="#fff"/><path d="M0.3 12.6 V10.6 A3.4 3.4 0 0 1 3.7 7.3 H8.3 A3.4 3.4 0 0 1 11.7 10.6 V12.6Z" fill="#fff"/></svg>
<span id="t3" class="tx" style="left:983.8px;top:74.6px;font-size:9px;line-height:10.8px;color:#fff;font-weight:bold;transform:scaleX(0.7545);">Вход</span></div>
<div id="browser"><div class="abs" style="left:0;top:0;width:1280px;height:26.3px;background:#fedcd1"></div>
<div class="abs" style="left:0;top:26.3px;width:1280px;height:31.7px;background:#fef4ef"></div>
<div class="abs" style="left:5px;top:4px;width:17px;height:18px;border-radius:6px;background:#fde7e0"></div>
<svg class="abs" style="left:9px;top:10px" width="9" height="6" viewBox="0 0 9 6"><path d="M1.5 1.2 L4.5 4.2 L7.5 1.2" fill="none" stroke="#333" stroke-width="1.4"/></svg>
<div class="abs" style="left:27px;top:4px;width:154px;height:23px;background:#fef4ef;border-radius:7px 7px 0 0"></div>
<svg class="abs" style="left:31px;top:8px" width="12" height="12" viewBox="0 0 12 12"><circle cx="6" cy="6" r="5.5" fill="#1d6fb8"/><path d="M3 6.3 L6 3.6 L9 6.3 V8.8 H6.8 V7 H5.2 V8.8 H3Z" fill="#fff"/></svg>
<div class="abs" style="left:0;top:0;width:160px;height:26px;overflow:hidden;-webkit-mask-image:linear-gradient(90deg,#000 152px,transparent 159px);mask-image:linear-gradient(90deg,#000 152px,transparent 159px)"><span id="t4" class="tx" style="left:47.5px;top:9.0px;font-size:9.3px;line-height:11.2px;color:#2b2b2b;transform:scaleX(0.8744);">Публичная кадастровая карта</span></div>
<svg class="abs" style="left:167px;top:11px" width="6.4" height="6.4" viewBox="0 0 8 8"><path d="M1 1 L7 7 M7 1 L1 7" stroke="#222" stroke-width="1.6"/></svg>
<svg class="abs" style="left:191px;top:9px" width="10" height="10" viewBox="0 0 10 10"><circle cx="3" cy="6.5" r="2.6" fill="#1ea7e8"/><circle cx="6.5" cy="3" r="2" fill="#8c5cf0"/><circle cx="7" cy="7.3" r="1.6" fill="#ff4053"/><circle cx="3.2" cy="2.4" r="1.3" fill="#3ecf5a"/></svg>
<span id="t5" class="tx" style="left:206.5px;top:9.0px;font-size:9.3px;line-height:11.2px;color:#3a3a3a;transform:scaleX(0.8797);">Авито - Корзина</span>
<svg class="abs" style="left:326px;top:11px" width="6.4" height="6.4" viewBox="0 0 8 8"><path d="M1 1 L7 7 M7 1 L1 7" stroke="#333" stroke-width="1.5"/></svg>
<div class="abs" style="left:341px;top:9px;width:1px;height:10px;background:#efc5bb"></div>
<svg class="abs" style="left:348px;top:9px" width="10" height="10" viewBox="0 0 10 10"><path d="M5 1 V9 M1 5 H9" stroke="#333" stroke-width="1.1"/></svg>
<svg class="abs" style="left:1198px;top:8px" width="80" height="12" viewBox="0 0 80 12"><path d="M2 5 H9" stroke="#777" stroke-width="1"/><rect x="33" y="3.5" width="5.5" height="5.5" fill="none" stroke="#222" stroke-width="1"/><path d="M34.8 3.5 V2 H40.2 V7.4 H38.6" fill="none" stroke="#222" stroke-width="1"/><path d="M63 2.5 L69.5 9 M69.5 2.5 L63 9" stroke="#222" stroke-width="1"/></svg>
<svg class="abs" style="left:8px;top:36px" width="64" height="12" viewBox="0 0 64 12"><path d="M11 6 H2.5 M6 2.2 L2.3 6 L6 9.8" fill="none" stroke="#444" stroke-width="1.3"/><path d="M25 6 H33.5 M30 2.2 L33.7 6 L30 9.8" fill="none" stroke="#b9aaa6" stroke-width="1.3"/><path d="M58.3 4.2 A4.2 4.2 0 1 0 58.8 7.6" fill="none" stroke="#444" stroke-width="1.3"/><path d="M59.3 1.5 V5 H55.8Z" fill="#444"/></svg>
<div class="abs" style="left:80px;top:31px;width:1035px;height:21.5px;border-radius:11px;background:#f3e4e3"></div>
<div class="abs" style="left:83px;top:33.5px;width:17px;height:17px;border-radius:50%;background:#fdf7f5"></div>
<svg class="abs" style="left:86px;top:37px" width="11" height="10" viewBox="0 0 11 10"><path d="M1 2.8 H4 M7.5 2.8 H10 M1 7.2 H3.5 M7 7.2 H10" stroke="#444" stroke-width="1.2"/><circle cx="5.8" cy="2.8" r="1.5" fill="none" stroke="#444" stroke-width="1.1"/><circle cx="5.2" cy="7.2" r="1.5" fill="none" stroke="#444" stroke-width="1.1"/></svg>
<span id="t6" class="tx" style="left:104.5px;top:36.2px;font-size:9.6px;line-height:11.5px;color:#555;transform:scaleX(0.9735);"><span style="color:#222">росреестра-выписка.рус</span>/кадастровая_карта#lat=57.490539&amp;lng=39.826405&amp;zoom=17&amp;ct=57.490538&amp;cg=39.824473</span>
<svg class="abs" style="left:1094px;top:36px" width="12" height="12" viewBox="0 0 12 12"><path d="M6 1.2 L7.5 4.4 L11 4.8 L8.4 7.1 L9.1 10.6 L6 8.8 L2.9 10.6 L3.6 7.1 L1 4.8 L4.5 4.4Z" fill="none" stroke="#444" stroke-width="1.1" stroke-linejoin="round"/></svg>
<div class="abs" style="left:1128px;top:36.5px;width:11px;height:11px;border-radius:2.5px;background:#1e6fe0"></div>
<svg class="abs" style="left:1130px;top:38.5px" width="7" height="7" viewBox="0 0 7 7"><path d="M1 1 L3.5 4 L6 1 M3.5 4 V6.5" stroke="#fff" stroke-width="1.5" fill="none"/></svg>
<div class="abs" style="left:1152px;top:37px;width:10.5px;height:10.5px;background:#c8202c"></div>
<div class="abs" style="left:1154.5px;top:39.5px;width:2px;height:6px;background:#f6c9c9"></div><div class="abs" style="left:1158px;top:39.5px;width:2.5px;height:6px;background:#fbe1e1"></div>
<div class="abs" style="left:1176px;top:37px;width:11px;height:10.5px;border-radius:2px;background:#a5a5a5"></div>
<div class="abs" style="left:1179px;top:39px;width:2px;height:6.5px;background:#fff"></div><div class="abs" style="left:1182.5px;top:39px;width:2.5px;height:2.5px;background:#fff"></div><div class="abs" style="left:1182.5px;top:43px;width:2.5px;height:2.5px;background:#fff"></div>
<svg class="abs" style="left:1199.5px;top:35.5px" width="13" height="13" viewBox="0 0 13 13"><path d="M2 4.2 H4.7 V3.5 A1.5 1.5 0 1 1 7.7 3.5 V4.2 H10.4 V6.6 H9.8 A1.5 1.5 0 1 0 9.8 9.6 H10.4 V11.6 H2Z" fill="none" stroke="#333" stroke-width="1.2" stroke-linejoin="round"/></svg>
<div class="abs" style="left:1222.5px;top:36px;width:1px;height:12px;background:#e5cfca"></div>
<div class="abs" style="left:1234.5px;top:35.5px;width:13px;height:13px;border-radius:50%;background:radial-gradient(circle at 45% 55%,#8a3b2b 0,#4a2a1c 55%,#5b6b3a 100%)"></div>
<svg class="abs" style="left:1263px;top:36px" width="4" height="12" viewBox="0 0 4 12"><circle cx="2" cy="2" r="1.1" fill="#333"/><circle cx="2" cy="6" r="1.1" fill="#333"/><circle cx="2" cy="10" r="1.1" fill="#333"/></svg></div>
<div id="panel"><div class="abs" style="left:8px;top:107px;width:640px;height:24px;background:#fff;box-shadow:0 1px 3px rgba(0,0,0,.25);border-radius:1px"></div>
<div class="abs" style="left:35px;top:107px;width:1px;height:24px;background:#d8dde2"></div>
<svg class="abs" style="left:16.5px;top:114px" width="11" height="10" viewBox="0 0 11 10"><path d="M0.5 1.2 H10.5 M0.5 5 H10.5 M0.5 8.8 H10.5" stroke="#1a64a6" stroke-width="1.6"/></svg>
<span id="t7" class="tx" style="left:43.8px;top:112.7px;font-size:10.6px;line-height:12.7px;color:#4a4a4a;transform:scaleX(0.8802);">76:17:143001:78</span>
<svg class="abs" style="left:603px;top:113px" width="13" height="13" viewBox="0 0 13 13"><circle cx="6" cy="6" r="4.4" fill="none" stroke="#1a64a6" stroke-width="1.3"/><path d="M9 9.2 L11 11.5" stroke="#1a64a6" stroke-width="1.3"/></svg>
<div class="abs" style="left:621px;top:113px;width:1px;height:12px;background:#d0d6db"></div>
<svg class="abs" style="left:629px;top:115px" width="9" height="9" viewBox="0 0 9 9"><path d="M1 1 L8 8 M8 1 L1 8" stroke="#1a64a6" stroke-width="1"/></svg>
<div class="abs" style="left:654px;top:107px;width:22.5px;height:24px;background:#fff;box-shadow:0 1px 2px rgba(0,0,0,.12)"></div>
<svg class="abs" style="left:661.2px;top:115.2px" width="7.8" height="7.8" viewBox="0 0 10 10"><path d="M5 0.4 L6.4 3.5 L9.8 3.8 L7.2 6 L8 9.4 L5 7.6 L2 9.4 L2.8 6 L0.2 3.8 L3.6 3.5Z" fill="#3c3c3c"/></svg>
<div class="abs" style="left:8px;top:138.5px;width:244px;height:501.6px;background:#fff;box-shadow:1px 1px 4px rgba(0,0,0,.35)"></div>
<div class="abs" style="left:141px;top:138.5px;width:111px;height:25.5px;background:#f1f4f8;border-left:1px solid #e3e8ee;border-bottom:1px solid #e3e8ee;box-sizing:border-box"></div>
<svg class="abs" style="left:25px;top:146.5px" width="10" height="11" viewBox="0 0 10 11"><circle cx="5" cy="3.8" r="3" fill="none" stroke="#1f6db0" stroke-width="1"/><path d="M2.6 6 L0.6 10 H9.4 L7.4 6" fill="none" stroke="#1f6db0" stroke-width="1"/><circle cx="5" cy="3.8" r="1" fill="#1f6db0"/></svg>
<span id="t8" class="tx" style="left:37.5px;top:145.7px;font-size:10.6px;line-height:12.7px;color:#1f6db0;transform:scaleX(0.9076);">Земельный участок</span>
<svg class="abs" style="left:160px;top:147px" width="9" height="10" viewBox="0 0 9 10"><path d="M0.8 9.5 V0.8 H4.4 V9.5 M4.4 3.6 H8.2 V9.5 M0 9.5 H9 M2 2.6 H3.2 M2 4.6 H3.2 M2 6.6 H3.2 M5.8 5.4 H6.8 M5.8 7.4 H6.8" fill="none" stroke="#cfd3d8" stroke-width="0.9"/></svg>
<span id="t9" class="tx" style="left:173px;top:145.7px;font-size:10.6px;line-height:12.7px;color:#c9cdd2;transform:scaleX(0.9055);">Дом (здание)</span>
<span id="t10" class="tx" style="left:15.3px;top:174.8px;font-size:10px;line-height:12.0px;color:#333;font-weight:bold;transform:scaleX(0.7916);">Кад.номер:</span>
<span id="t11" class="tx" style="left:108.8px;top:174.8px;font-size:10px;line-height:12.0px;color:#4a90d2;transform:scaleX(0.8205);">76:17:143001:78</span>
<span id="t12" class="tx" style="left:15.3px;top:196.8px;font-size:10px;line-height:12.0px;color:#333;font-weight:bold;transform:scaleX(0.7471);">Адрес:</span>
<span id="t13" class="tx" style="left:108.8px;top:196.8px;font-size:10px;line-height:12.0px;color:#444;transform:scaleX(0.8219);">Ярославская область, р-н Яросла</span>
<span id="t14" class="tx" style="left:108.8px;top:207.4px;font-size:10px;line-height:12.0px;color:#444;transform:scaleX(0.8560);">вский, Карабихский сельский ок</span>
<span id="t15" class="tx" style="left:108.8px;top:218.0px;font-size:10px;line-height:12.0px;color:#444;transform:scaleX(0.8338);">руг, д. Шепелево</span>
<span id="t16" class="tx" style="left:15.3px;top:238.6px;font-size:10px;line-height:12.0px;color:#333;font-weight:bold;transform:scaleX(0.7581);">Площадь:</span>
<span id="t17" class="tx" style="left:108.8px;top:238.6px;font-size:10px;line-height:12.0px;color:#444;transform:scaleX(0.8150);">1 008</span>
<div class="abs" style="left:15px;top:254.8px;width:231px;height:1.4px;background:#e2e8ee"></div>
<div class="abs" style="left:23px;top:263px;width:24px;height:24px;border-radius:50%;border:1px solid #e3e3e3;box-sizing:border-box"></div>
<svg class="abs" style="left:30px;top:269.5px" width="10" height="10" viewBox="0 0 10 10"><path d="M5 0.9 L6.2 3.7 L9.2 4 L6.9 6 L7.6 9 L5 7.4 L2.4 9 L3.1 6 L0.8 4 L3.8 3.7Z" fill="none" stroke="#555" stroke-width="0.9" stroke-linejoin="round"/></svg>
<div class="abs" style="left:68.4px;top:263px;width:24px;height:24px;border-radius:50%;border:1px solid #e3e3e3;box-sizing:border-box"></div>
<svg class="abs" style="left:76px;top:270.5px" width="9" height="9" viewBox="0 0 9 9"><path d="M7 1.5 L2 4.5 L7 7.5" fill="none" stroke="#444" stroke-width="0.8"/><circle cx="7.2" cy="1.5" r="1.3" fill="#444"/><circle cx="1.8" cy="4.5" r="1.3" fill="#444"/><circle cx="7.2" cy="7.5" r="1.3" fill="#444"/></svg>
<span id="t18" class="tx" style="left:20.4px;top:289.5px;font-size:8.6px;line-height:10.3px;color:#333;font-weight:bold;transform:scaleX(0.7751);">В список</span>
<span id="t19" class="tx" style="left:60.4px;top:289.5px;font-size:8.6px;line-height:10.3px;color:#333;font-weight:bold;transform:scaleX(0.7755);">Поделиться</span>
<div class="abs" style="left:117px;top:262.2px;width:125.7px;height:25.6px;border-radius:13px;background:#2da046"></div>
<span id="t20" class="tx" style="left:128.9px;top:268.8px;font-size:11.4px;line-height:13.7px;color:#fff;font-weight:bold;transform:scaleX(0.7881);">Документы объекта</span>
<svg class="abs" style="left:221.8px;top:269.5px" width="9.5" height="11" viewBox="0 0 9.5 11"><path d="M0.7 0.7 H6 L8.8 3.4 V10.3 H0.7Z M6 0.7 V3.4 H8.8" fill="none" stroke="#fff" stroke-width="1"/><path d="M2.4 5.2 H7 M2.4 6.9 H7 M2.4 8.6 H7" stroke="#d8f0dc" stroke-width="0.7"/></svg>
<span id="t21" class="tx" style="left:130px;top:289.5px;font-size:8.6px;line-height:10.3px;color:#333;font-weight:bold;transform:scaleX(0.7694);">Собственник, стоимость и др.</span>
<div class="abs" style="left:15px;top:305.4px;width:231px;height:1.4px;background:#e2e8ee"></div>
<span id="t22" class="tx" style="left:15.3px;top:311.8px;font-size:10px;line-height:12.0px;color:#333;font-weight:bold;transform:scaleX(0.7916);">Кадастровая</span>
<span id="t23" class="tx" style="left:15.3px;top:322.6px;font-size:10px;line-height:12.0px;color:#333;font-weight:bold;transform:scaleX(0.7729);">стоимость:</span>
<span id="t24" class="tx" style="left:108.8px;top:311.8px;font-size:10px;line-height:12.0px;color:#4a90d2;transform:scaleX(0.8443);">заказать справку на дату</span>
<span id="t25" class="tx" style="left:15.3px;top:343.8px;font-size:10px;line-height:12.0px;color:#333;font-weight:bold;transform:scaleX(0.7804);">Риски при сделке:</span>
<span id="t26" class="tx" style="left:108.8px;top:343.8px;font-size:10px;line-height:12.0px;color:#444;transform:scaleX(0.8335);">банкротства, аресты, суды</span>
<span id="t27" class="tx" style="left:108.8px;top:355.5px;font-size:10px;line-height:12.0px;color:#4a90d2;transform:scaleX(0.8391);">полная проверка</span>
<span id="t28" class="tx" style="left:15.3px;top:376.1px;font-size:10px;line-height:12.0px;color:#333;font-weight:bold;transform:scaleX(0.7764);">Координаты:</span>
<span id="t29" class="tx" style="left:108.8px;top:376.1px;font-size:10px;line-height:12.0px;color:#444;transform:scaleX(0.8211);">57.490539, 39.826405</span>
<div class="abs" style="left:15px;top:392.7px;width:231px;height:1.4px;background:#e2e8ee"></div>
<span id="t30" class="tx" style="left:15.3px;top:399.1px;font-size:10px;line-height:12.0px;color:#333;font-weight:bold;transform:scaleX(0.7734);">Вид объекта</span>
<span id="t31" class="tx" style="left:15.3px;top:409.8px;font-size:10px;line-height:12.0px;color:#333;font-weight:bold;transform:scaleX(0.7935);">недвижимости</span>
<span id="t32" class="tx" style="left:108.8px;top:399.1px;font-size:10px;line-height:12.0px;color:#555;transform:scaleX(0.8350);">Земельный участок</span>
<span id="t33" class="tx" style="left:15.3px;top:431.3px;font-size:10px;line-height:12.0px;color:#333;font-weight:bold;transform:scaleX(0.7787);">Вид земельного</span>
<span id="t34" class="tx" style="left:15.3px;top:442.0px;font-size:10px;line-height:12.0px;color:#333;font-weight:bold;transform:scaleX(0.8033);">участка</span>
<span id="t35" class="tx" style="left:108.8px;top:431.3px;font-size:10px;line-height:12.0px;color:#555;transform:scaleX(0.8346);">Землепользование</span>
<span id="t36" class="tx" style="left:15.3px;top:463.1px;font-size:10px;line-height:12.0px;color:#333;font-weight:bold;transform:scaleX(0.7848);">Дата присвоения</span>
<span id="t37" class="tx" style="left:108.8px;top:463.1px;font-size:10px;line-height:12.0px;color:#555;transform:scaleX(0.8210);">02.03.2016</span>
<span id="t38" class="tx" style="left:15.3px;top:484.2px;font-size:10px;line-height:12.0px;color:#333;font-weight:bold;transform:scaleX(0.7840);">Кадастровый</span>
<span id="t39" class="tx" style="left:15.3px;top:495.1px;font-size:10px;line-height:12.0px;color:#333;font-weight:bold;transform:scaleX(0.7898);">квартал</span>
<span id="t40" class="tx" style="left:108.8px;top:484.2px;font-size:10px;line-height:12.0px;color:#555;transform:scaleX(0.8059);">76:17:143001</span>
<span id="t41" class="tx" style="left:15.3px;top:516.5px;font-size:10px;line-height:12.0px;color:#333;font-weight:bold;transform:scaleX(0.7747);">Площадь уточненная</span>
<span id="t42" class="tx" style="left:108.8px;top:516.5px;font-size:10px;line-height:12.0px;color:#555;transform:scaleX(0.8376);">1008 кв. м</span>
<span id="t43" class="tx" style="left:15.3px;top:537.6px;font-size:10px;line-height:12.0px;color:#333;font-weight:bold;transform:scaleX(0.7685);">Статус</span>
<span id="t44" class="tx" style="left:108.8px;top:537.6px;font-size:10px;line-height:12.0px;color:#555;transform:scaleX(0.8212);">Учтенный</span>
<span id="t45" class="tx" style="left:15.3px;top:559.4px;font-size:10px;line-height:12.0px;color:#333;font-weight:bold;transform:scaleX(0.7900);">Категория земель</span>
<span id="t46" class="tx" style="left:108.8px;top:559.4px;font-size:10px;line-height:12.0px;color:#555;transform:scaleX(0.8374);">Земли населенных пунктов</span>
<span id="t47" class="tx" style="left:15.3px;top:581.0px;font-size:10px;line-height:12.0px;color:#333;font-weight:bold;transform:scaleX(0.7772);">Вид разрешенного</span>
<span id="t48" class="tx" style="left:15.3px;top:591.8px;font-size:10px;line-height:12.0px;color:#333;font-weight:bold;transform:scaleX(0.7930);">использования</span>
<span id="t49" class="tx" style="left:108.8px;top:581.0px;font-size:10px;line-height:12.0px;color:#555;transform:scaleX(0.8476);">Для ведения личного подсобног</span>
<span id="t50" class="tx" style="left:108.8px;top:591.8px;font-size:10px;line-height:12.0px;color:#555;transform:scaleX(0.8442);">о хозяйства</span>
<span id="t51" class="tx" style="left:15.3px;top:613.1px;font-size:10px;line-height:12.0px;color:#333;font-weight:bold;transform:scaleX(0.6457);">Форма</span>
<span id="t52" class="tx" style="left:15.3px;top:623.8px;font-size:10px;line-height:12.0px;color:#333;font-weight:bold;transform:scaleX(0.7941);">собственности</span>
<span id="t53" class="tx" style="left:108.8px;top:613.1px;font-size:10px;line-height:12.0px;color:#555;transform:scaleX(0.8222);">Частная</span>
<div class="abs" style="left:9px;top:645px;width:58px;height:18px;border-radius:9px;background:#fff;box-shadow:1.5px 2px 3px rgba(0,0,0,.38)"></div>
<svg class="abs" style="left:20.5px;top:651px" width="6" height="6" viewBox="0 0 6 6"><path d="M0.5 0.5 L5.5 5.5 M5.5 0.5 L0.5 5.5" stroke="#666" stroke-width="0.7"/></svg>
<span id="t54" class="tx" style="left:32.3px;top:649.1px;font-size:8.6px;line-height:10.3px;color:#555;transform:scaleX(0.8383);">скрыть</span>
<div class="abs" style="left:77px;top:645px;width:60px;height:18px;border-radius:9px;background:#fff;box-shadow:1.5px 2px 3px rgba(0,0,0,.38)"></div>
<svg class="abs" style="left:87px;top:651.5px" width="7" height="5" viewBox="0 0 7 5"><path d="M0.5 4.2 L3.5 1 L6.5 4.2" fill="none" stroke="#666" stroke-width="0.7"/></svg>
<span id="t55" class="tx" style="left:99.3px;top:649.1px;font-size:8.6px;line-height:10.3px;color:#555;transform:scaleX(0.8229);">меньше</span></div>
<div id="controls"><div class="mbtn" style="left:1251px;top:106px;width:22px;height:22.5px"></div>
<svg class="abs" style="left:1256px;top:111px" width="12" height="12" viewBox="0 0 12 12"><path d="M6 0.8 L11.2 3.4 L6 6 L0.8 3.4Z" fill="#444"/><path d="M1.2 5.6 L6 8 L10.8 5.6 M1.2 7.9 L6 10.3 L10.8 7.9" fill="none" stroke="#444" stroke-width="1.2"/></svg>
<div class="mbtn" style="left:1251px;top:138px;width:22px;height:22.5px"></div>
<svg class="abs" style="left:1256.5px;top:143.5px" width="11" height="11" viewBox="0 0 11 11"><path d="M1 0.5 V10 H10.5" fill="none" stroke="#111" stroke-width="2"/><path d="M1 1 H10 V10" fill="none" stroke="#888" stroke-width="0.7"/></svg>
<div class="mbtn" style="left:1251px;top:198px;width:22px;height:42px"></div>
<div class="abs" style="left:1252px;top:218.6px;width:20px;height:1px;background:#e2e2e2"></div>
<svg class="abs" style="left:1257.5px;top:204px" width="9" height="9" viewBox="0 0 9 9"><path d="M4.5 0.3 V8.7 M0.3 4.5 H8.7" stroke="#111" stroke-width="1.6"/></svg>
<svg class="abs" style="left:1257.5px;top:224px" width="9" height="9" viewBox="0 0 9 9"><path d="M0.3 4.5 H8.7" stroke="#111" stroke-width="1.6"/></svg>
<div class="abs" style="left:1099px;top:643px;width:142px;height:26px;background:#0662a3;border-radius:2px;box-shadow:0 1px 2px rgba(0,0,0,.2)"></div>
<svg class="abs" style="left:1114px;top:651.5px" width="9" height="9" viewBox="0 0 9 9"><path d="M7.8 3.3 A3.5 3.5 0 0 0 1.5 2.6 M1.2 5.7 A3.5 3.5 0 0 0 7.5 6.4" fill="none" stroke="#fff" stroke-width="1.2"/><path d="M8.6 0.8 V3.8 H5.6Z M0.4 8.2 V5.2 H3.4Z" fill="#fff"/></svg>
<span id="t56" class="tx" style="left:1127.5px;top:649.9px;font-size:11px;line-height:13.2px;color:#fff;font-weight:bold;transform:scaleX(0.8108);">Кадастровые границы</span>
<div class="mbtn" style="left:1251px;top:645.5px;width:22px;height:22px"></div>
<svg class="abs" style="left:1258px;top:652px" width="9" height="9" viewBox="0 0 9 9"><path d="M8.3 0.7 L0.8 4 L4.6 4.5 L5 8.2Z" fill="none" stroke="#333" stroke-width="0.9" stroke-linejoin="round"/></svg>
<span id="t57" class="tx" style="left:1112px;top:677.6px;font-size:8.6px;line-height:10.3px;color:#444;transform:scaleX(0.9834);">© Яндекс</span>
<span id="t58" class="tx" style="left:1151px;top:677.6px;font-size:8.6px;line-height:10.3px;color:#444;transform:scaleX(0.9540);text-decoration:underline">Условия использования</span>
<span id="t59" class="tx" style="left:1248px;top:676.5px;font-size:10.4px;line-height:12.5px;color:#4a4a4a;transform:scaleX(0.8293);"><span style="color:#ee5a36">Я</span>ндекс</span></div>
<div id="taskbar"><div class="abs" style="left:0;top:693.3px;width:1280px;height:27px;background:#1f303d"></div>
<svg class="abs" style="left:8.5px;top:700px" width="14" height="14" viewBox="0 0 14 14"><path d="M0 2 L6 1.1 V6.5 H0Z M7 1 L14 0 V6.5 H7Z M0 7.5 H6 V12.9 L0 12Z M7 7.5 H14 V14 L7 13Z" fill="#fff"/></svg>
<div class="abs" style="left:36.5px;top:700px;width:1px;height:14px;background:#4a5661"></div><div class="abs" style="left:38.5px;top:700px;width:1px;height:14px;background:#3a4651"></div>
<div class="abs" style="left:48.5px;top:694px;width:30px;height:26px;background:#46515c;box-sizing:border-box;border:1px solid #566370;border-bottom:none"></div>
<svg class="abs" style="left:55.5px;top:699px" width="15" height="15" viewBox="0 0 15 15"><circle cx="7.5" cy="7.5" r="7.5" fill="#fff"/><path d="M4.2 3.4 L7.5 8 L10.8 3.4 M7.5 8 V12.4" fill="none" stroke="#f2382e" stroke-width="1.9"/></svg>
<svg class="abs" style="left:86px;top:698px" width="16" height="16" viewBox="0 0 16 16"><circle cx="8" cy="8" r="7.6" fill="#8e1620"/><circle cx="8" cy="5.4" r="2.1" fill="none" stroke="#fff" stroke-width="1.3"/><circle cx="8" cy="10" r="2.7" fill="none" stroke="#fff" stroke-width="1.3"/><path d="M10.6 3 L12.2 1.6" stroke="#fff" stroke-width="1"/></svg>
<svg class="abs" style="left:120.5px;top:698.5px" width="15" height="15" viewBox="0 0 16 16"><circle cx="8" cy="8" r="7.6" fill="#e8453c"/><path d="M8 8 L1.4 4.2 A7.6 7.6 0 0 0 8 15.6 L11.6 9.6Z" fill="#30a952"/><path d="M8 8 L8 15.6 A7.6 7.6 0 0 0 14.6 4.2 L8 4.2Z" fill="#fbc116"/><path d="M1.4 4.2 A7.6 7.6 0 0 1 14.6 4.2 L8 4.2 L4.7 6.1Z" fill="#e8453c"/><circle cx="8" cy="8" r="3.5" fill="#fff"/><circle cx="8" cy="8" r="2.7" fill="#4a8af4"/></svg>
<div class="abs" style="left:146.5px;top:694px;width:30px;height:26px;background:#46515c;box-sizing:border-box;border:1px solid #566370;border-bottom:none"></div>
<svg class="abs" style="left:153.5px;top:699.5px" width="16" height="14" viewBox="0 0 16 14"><path d="M0.5 1.2 H6 L7.4 2.8 H15.5 V13 H0.5Z" fill="#f6c443"/><path d="M0.5 4.6 H15.5 V13 H0.5Z" fill="#fbd865"/><rect x="3.6" y="7.4" width="8.8" height="5.6" fill="#3a8ee6"/><rect x="6" y="9.8" width="4" height="3.2" fill="#fbd865"/></svg>
<div class="abs" style="left:179px;top:694px;width:30px;height:26px;background:#46515c;box-sizing:border-box;border:1px solid #566370;border-bottom:none"></div>
<svg class="abs" style="left:185.5px;top:698.5px" width="18" height="17" viewBox="0 0 18 17"><circle cx="7.6" cy="7.6" r="7.4" fill="#f8c51a"/><path d="M4.6 5 V10.4 M7.2 9.6 A2.4 2.4 0 1 1 9.6 6" fill="none" stroke="#d9261c" stroke-width="1.3"/><circle cx="12.6" cy="11.8" r="4.2" fill="#e5322a"/><text x="12.6" y="14.4" font-size="7" font-family="Liberation Sans,sans-serif" fill="#fff" text-anchor="middle" font-weight="bold">2</text></svg>
<div class="abs" style="left:211.5px;top:694px;width:30px;height:26px;background:#46515c;box-sizing:border-box;border:1px solid #566370;border-bottom:none"></div>
<svg class="abs" style="left:220.5px;top:698.5px" width="15" height="17" viewBox="0 0 15 17"><path d="M0.5 0.5 H8 L11 3.5 V14.5 H0.5Z" fill="#f4f4f4"/><path d="M8 0.5 V3.5 H11Z" fill="#c9c9c9"/><rect x="5.5" y="9.5" width="9" height="7" fill="#d6332b"/><text x="10" y="15.3" font-size="5.5" font-family="Liberation Sans,sans-serif" fill="#fff" text-anchor="middle">.41</text></svg>
<div class="abs" style="left:244px;top:694px;width:30.5px;height:26px;background:#46515c;box-sizing:border-box;border:1px solid #566370;border-bottom:none"></div>
<svg class="abs" style="left:252px;top:701.5px" width="14" height="10.5" viewBox="0 0 15 13" preserveAspectRatio="none"><rect x="0.5" y="0.5" width="14" height="11" fill="#e9f2fb" stroke="#2e7bd1" stroke-width="1"/><rect x="0.5" y="0.5" width="14" height="2.6" fill="#2e7bd1"/><circle cx="4.6" cy="6.2" r="1.6" fill="#2e7bd1"/><path d="M2 10.4 A2.7 2.7 0 0 1 7.2 10.4Z" fill="#2e7bd1"/><path d="M9 5.4 H13 M9 7.6 H13 M9 9.6 H12" stroke="#6ea6e2" stroke-width="0.9"/></svg>
<div class="abs" style="left:276.5px;top:694px;width:30.5px;height:26px;background:linear-gradient(#f0b31c,#e9981c);box-sizing:border-box;border:1px solid #f3c050;border-bottom:none"></div>
<svg class="abs" style="left:284px;top:698.5px" width="16" height="16" viewBox="0 0 16 16"><circle cx="8" cy="8" r="7.6" fill="#fff"/><circle cx="8" cy="8" r="6.2" fill="#1e9c4a"/><path d="M8 3.6 V11.4 M5.6 11.6 H10.4" stroke="#fff" stroke-width="1.5"/></svg>
<div class="abs" style="left:309px;top:694px;width:31px;height:26px;background:#69737c;box-sizing:border-box;border:1px solid #949ca3;border-bottom:none"></div>
<svg class="abs" style="left:315.5px;top:698px" width="14.5" height="14.5" viewBox="0 0 16 16"><circle cx="8" cy="8" r="7.6" fill="#e8453c"/><path d="M8 8 L1.4 4.2 A7.6 7.6 0 0 0 8 15.6 L11.6 9.6Z" fill="#30a952"/><path d="M8 8 L8 15.6 A7.6 7.6 0 0 0 14.6 4.2 L8 4.2Z" fill="#fbc116"/><path d="M1.4 4.2 A7.6 7.6 0 0 1 14.6 4.2 L8 4.2 L4.7 6.1Z" fill="#e8453c"/><circle cx="8" cy="8" r="3.5" fill="#fff"/><circle cx="8" cy="8" r="2.7" fill="#4a8af4"/></svg>
<div class="abs" style="left:322px;top:705px;width:10.5px;height:10.5px;border-radius:50%;background:radial-gradient(circle at 45% 50%,#7a2c22 0,#3c1f16 70%)"></div>
<div class="abs" style="left:342px;top:694px;width:30.5px;height:26px;background:#46515c;box-sizing:border-box;border:1px solid #566370;border-bottom:none"></div>
<svg class="abs" style="left:349.5px;top:699.5px" width="16" height="14" viewBox="0 0 16 14"><rect x="5" y="0.5" width="10.5" height="13" rx="1" fill="#1f9d57"/><rect x="10" y="0.5" width="5.5" height="4.3" fill="#3fc07a"/><rect x="10" y="9" width="5.5" height="4.5" fill="#157a42"/><rect x="0.5" y="3" width="8.5" height="8.5" rx="1" fill="#137a43"/><path d="M3 5 L6.5 9.5 M6.5 5 L3 9.5" stroke="#fff" stroke-width="1.2"/></svg>
<div class="abs" style="left:701.3px;top:701px;width:1px;height:11px;background:#45525e"></div><div class="abs" style="left:703.7px;top:701px;width:1px;height:11px;background:#45525e"></div>
<span id="t60" class="tx" style="left:711.4px;top:701.5px;font-size:8.3px;line-height:10.0px;color:#fff;transform:scaleX(0.9139);">ВАЖНОЕ</span>
<span id="t61" class="tx" style="left:748.5px;top:694.9px;font-size:9px;line-height:10.8px;color:#fff;font-weight:bold;transform:scaleX(1.1963);">»</span>
<div class="abs" style="left:762.8px;top:701px;width:1px;height:11px;background:#45525e"></div><div class="abs" style="left:765.2px;top:701px;width:1px;height:11px;background:#45525e"></div>
<span id="t62" class="tx" style="left:772.8px;top:701.5px;font-size:8.3px;line-height:10.0px;color:#fff;transform:scaleX(0.9678);">Таблицы</span>
<span id="t63" class="tx" style="left:811.0px;top:694.9px;font-size:9px;line-height:10.8px;color:#fff;font-weight:bold;transform:scaleX(1.1963);">»</span>
<div class="abs" style="left:824.8px;top:701px;width:1px;height:11px;background:#45525e"></div><div class="abs" style="left:827.2px;top:701px;width:1px;height:11px;background:#45525e"></div>
<span id="t64" class="tx" style="left:834.7px;top:701.5px;font-size:8.3px;line-height:10.0px;color:#fff;transform:scaleX(0.8978);">ТАБЛИЦЫ БУХ</span>
<span id="t65" class="tx" style="left:893.0px;top:694.9px;font-size:9px;line-height:10.8px;color:#fff;font-weight:bold;transform:scaleX(1.1963);">»</span>
<div class="abs" style="left:906.8px;top:701px;width:1px;height:11px;background:#45525e"></div><div class="abs" style="left:909.2px;top:701px;width:1px;height:11px;background:#45525e"></div>
<span id="t66" class="tx" style="left:916.8px;top:701.5px;font-size:8.3px;line-height:10.0px;color:#fff;transform:scaleX(0.9285);">1 ФМ</span>
<span id="t67" class="tx" style="left:941.0px;top:694.9px;font-size:9px;line-height:10.8px;color:#fff;font-weight:bold;transform:scaleX(1.1963);">»</span>
<div class="abs" style="left:955.4px;top:701px;width:1px;height:11px;background:#45525e"></div><div class="abs" style="left:957.8000000000001px;top:701px;width:1px;height:11px;background:#45525e"></div>
<span id="t68" class="tx" style="left:964.6px;top:701.5px;font-size:8.3px;line-height:10.0px;color:#fff;transform:scaleX(0.8670);">1 ОТВЕТЫ В ФНС</span>
<span id="t69" class="tx" style="left:1038.0px;top:694.9px;font-size:9px;line-height:10.8px;color:#fff;font-weight:bold;transform:scaleX(1.1963);">»</span>
<div class="abs" style="left:1052.3999999999999px;top:701px;width:1px;height:11px;background:#45525e"></div><div class="abs" style="left:1054.8px;top:701px;width:1px;height:11px;background:#45525e"></div>
<span id="t70" class="tx" style="left:1062px;top:701.5px;font-size:8.3px;line-height:10.0px;color:#fff;transform:scaleX(0.9175);">МАВ</span>
<span id="t71" class="tx" style="left:1084.0px;top:694.9px;font-size:9px;line-height:10.8px;color:#fff;font-weight:bold;transform:scaleX(1.1963);">»</span>
<div class="abs" style="left:1031px;top:698px;width:1.6px;height:9px;background:#f2d94a"></div>
<svg class="abs" style="left:1095px;top:703px" width="9" height="6" viewBox="0 0 9 6"><path d="M0.8 5 L4.5 1.2 L8.2 5" fill="none" stroke="#fff" stroke-width="1"/></svg>
<svg class="abs" style="left:1110px;top:701px" width="12" height="11" viewBox="0 0 12 11"><path d="M0.3 5 L11.6 0.4 L9.6 10.4 L6.2 7.8 L4.4 9.6 L4.2 6.6Z" fill="#fff"/><path d="M4.2 6.6 L9.4 2.4 L6.2 7.8" fill="#c9d3dc"/><circle cx="9.5" cy="8.5" r="2" fill="#e5322a"/></svg>
<svg class="abs" style="left:1127px;top:701px" width="11" height="11" viewBox="0 0 11 11"><circle cx="5.5" cy="5.5" r="5.2" fill="#35c6c0"/><circle cx="5.5" cy="5.5" r="3.6" fill="#fff"/><text x="5.5" y="8" font-size="6.5" font-family="Liberation Sans,sans-serif" fill="#1aa6a0" text-anchor="middle" font-weight="bold">B</text></svg>
<svg class="abs" style="left:1143px;top:701px" width="12" height="11" viewBox="0 0 12 11"><rect x="2.6" y="0.6" width="8.8" height="6.4" fill="none" stroke="#fff" stroke-width="1"/><path d="M5 9.6 H9.4 M7.2 7 V9.6" stroke="#fff" stroke-width="1"/><rect x="0.4" y="5" width="3.4" height="5.4" fill="#1c2b38" stroke="#fff" stroke-width="0.8"/></svg>
<svg class="abs" style="left:1158px;top:701px" width="13" height="11" viewBox="0 0 13 11"><path d="M0.5 3.6 H2.6 L5.4 1 V9.6 L2.6 7 H0.5Z" fill="none" stroke="#fff" stroke-width="0.9"/><circle cx="9.6" cy="7.6" r="3" fill="#e5322a"/><path d="M8.4 6.4 L10.8 8.8 M10.8 6.4 L8.4 8.8" stroke="#fff" stroke-width="0.8"/></svg>
<span id="t72" class="tx" style="left:1177px;top:701.5px;font-size:8.3px;line-height:10.0px;color:#fff;transform:scaleX(0.8722);">РУС</span>
<span id="t73" class="tx" style="left:1211.5px;top:695.3px;font-size:8.3px;line-height:10.0px;color:#fff;transform:scaleX(0.8232);">9:52</span>
<span id="t74" class="tx" style="left:1201px;top:707.8px;font-size:8.3px;line-height:10.0px;color:#fff;transform:scaleX(0.8572);">19.03.2025</span>
<svg class="abs" style="left:1246.5px;top:699px" width="17" height="16" viewBox="0 0 17 16"><path d="M0.8 0.8 H11.6 V9 H4.6 L2.4 11.4 V9 H0.8Z" fill="#fff"/><path d="M2.8 3 H9.6 M2.8 5 H9.6 M2.8 7 H7" stroke="#1c2b38" stroke-width="0.8"/><circle cx="11.6" cy="10.6" r="4.6" fill="#1c2b38" stroke="#fff" stroke-width="1"/><text x="11.6" y="13.2" font-size="7.5" font-family="Liberation Sans,sans-serif" fill="#fff" text-anchor="middle">2</text></svg></div>
</body></html>
